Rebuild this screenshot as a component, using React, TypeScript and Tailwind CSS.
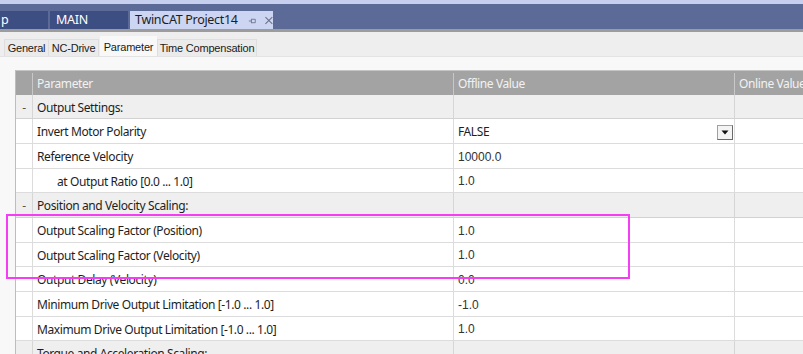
import React from "react";

type Row = {
  kind: "group" | "item";
  label: string;
  value?: string;
  indent?: boolean;
  dropdown?: boolean;
  h: number;
};

const rows: Row[] = [
  { kind: "group", label: "Output Settings:", h: 24 },
  { kind: "item", label: "Invert Motor Polarity", value: "FALSE", dropdown: true, h: 25 },
  { kind: "item", label: "Reference Velocity", value: "10000.0", h: 25 },
  { kind: "item", label: "at Output Ratio [0.0 ... 1.0]", value: "1.0", indent: true, h: 24 },
  { kind: "group", label: "Position and Velocity Scaling:", h: 25 },
  { kind: "item", label: "Output Scaling Factor (Position)", value: "1.0", h: 25 },
  { kind: "item", label: "Output Scaling Factor (Velocity)", value: "1.0", h: 24 },
  { kind: "item", label: "Output Delay (Velocity)", value: "0.0", h: 25 },
  { kind: "item", label: "Minimum Drive Output Limitation [-1.0 ... 1.0]", value: "-1.0", h: 25 },
  { kind: "item", label: "Maximum Drive Output Limitation [-1.0 ... 1.0]", value: "1.0", h: 24 },
  { kind: "group", label: "Torque and Acceleration Scaling:", h: 25 },
];

const ui = "font-['Noto_Sans','Open_Sans',sans-serif]";
const arial = "font-['Liberation_Sans',Arial,sans-serif]";

const DropButton: React.FC = () => (
  <div className="ml-auto mr-[1px] flex h-[15px] w-[16px] items-center justify-center border border-[#a0a0a0] border-b-[#6a6a6a] border-r-[#6a6a6a] bg-[#f4f4f4]">
    <svg width="8" height="5" viewBox="0 0 8 5">
      <path d="M0.5 0.5 L7.5 0.5 L4 4.5 Z" fill="#111" />
    </svg>
  </div>
);

export default function App() {
  return (
    <div className={`relative h-[354px] w-[803px] overflow-hidden bg-[#f8f8f8] ${ui}`}>
      <div className="h-[4px] bg-[#c7cfee]" />
      {/* document tab strip */}
      <div className="flex h-[25px] items-end gap-[2px] whitespace-nowrap bg-[#5b6a97] text-[12.5px] tracking-[-0.3px]">
        <div className="flex h-[18px] w-[48px] items-center bg-[#3d4e83] pl-[1px] pt-[1px] leading-none text-white">
          p
        </div>
        <div className="flex h-[18px] w-[78px] items-center bg-[#3d4e83] pl-[6px] pt-[1px] leading-none text-white">
          MAIN
        </div>
        <div className="flex h-[18px] w-[143px] items-center bg-[#ccd5f1] pl-[5px] pt-[1px] leading-none text-[#1e1e1e]">
          TwinCAT Project14
          <svg className="ml-[10px]" width="10" height="10" viewBox="0 0 10 10">
            <path d="M1 5 H4 M4 2.5 V7.5 M4 3 H8.5 V7 H4" stroke="#6b7088" strokeWidth="1" fill="none" />
          </svg>
          <svg className="ml-[9px]" width="9" height="9" viewBox="0 0 9 9">
            <path d="M0.5 0.5 L8.5 8.5 M8.5 0.5 L0.5 8.5" stroke="#6b7088" strokeWidth="1.2" />
          </svg>
        </div>
      </div>
      <div className="h-[3px] bg-[#9c9c9c]" />

      {/* property page tabs */}
      <div className={`flex h-[25px] items-end border-b border-[#e3e3e3] bg-[#eeeeee] pl-[4px] ${arial} text-[11px] tracking-[-0.2px] text-[#1a1a1a]`}>
        <div className="flex h-[17px] w-[45px] items-center justify-center border border-b-0 border-[#dedede] bg-[#ebebeb] pt-[1px]">
          General
        </div>
        <div className="flex h-[17px] w-[50px] items-center justify-center border border-b-0 border-l-0 border-[#dedede] bg-[#ebebeb] pt-[1px]">
          NC-Drive
        </div>
        <div className="ml-[1px] flex h-[20px] w-[57px] items-start justify-center bg-[#f8f8f8] pt-[3px]">
          Parameter
        </div>
        <div className="flex h-[17px] w-[100px] items-center justify-center border border-b-0 border-[#dedede] bg-[#ebebeb] pt-[1px]">
          Time Compensation
        </div>
      </div>

      {/* parameter grid */}
      <div className="pl-[15px] pt-[13px]">
        <div className="w-[1000px] whitespace-nowrap border-l border-[#bdbdbd] text-[12px] tracking-[-0.4px]">
          <div className="flex h-[25px] border-t border-[#c4c4c4] bg-[#a3a3a3] pt-[2px] text-[#f2f2f2]">
            <div className="w-[17px] border-r border-[#c8c8c8]" />
            <div className="flex w-[421px] items-center border-r border-[#c8c8c8] pl-[4px]">Parameter</div>
            <div className="flex w-[281px] items-center border-r border-[#c8c8c8] pl-[4px]">Offline Value</div>
            <div className="flex w-[80px] items-center pl-[4px]">Online Value</div>
          </div>
          {rows.map((r, i) =>
            r.kind === "group" ? (
              <div
                key={i}
                className="flex border-b border-[#d2d2d2] bg-[#efefef] text-[#1e1e1e]"
                style={{ height: r.h }}
              >
                <div className="flex w-[17px] items-center justify-center border-r border-[#d6d6d6] pt-[2px] text-[#555]">-</div>
                <div className="flex w-[421px] items-center border-r border-[#d6d6d6] pl-[4px] pt-[2px]">{r.label}</div>
                <div className="w-[281px] border-r border-[#d6d6d6]" />
                <div className="flex-1" />
              </div>
            ) : (
              <div
                key={i}
                className="flex border-b border-[#dcdcdc] bg-white text-[#1e1e1e]"
                style={{ height: r.h }}
              >
                <div className="w-[17px] border-r border-[#dcdcdc]" />
                <div
                  className={`flex w-[421px] items-center border-r border-[#dcdcdc] pt-[2px] ${r.indent ? "pl-[24px]" : "pl-[4px]"}`}
                >
                  {r.label}
                </div>
                <div
                  className={`flex w-[281px] items-center border-r border-[#dcdcdc] pl-[4px] ${r.dropdown ? "pt-[2px]" : `${arial} pt-[1px] tracking-normal text-[#333]`}`}
                >
                  {r.value}
                  {r.dropdown && <DropButton />}
                </div>
                <div className="flex-1" />
              </div>
            )
          )}
        </div>
      </div>

      {/* highlight annotation */}
      <div className="absolute left-[6px] top-[214px] h-[65px] w-[624px] border-2 border-[#f53ef3]" />
    </div>
  );
}
